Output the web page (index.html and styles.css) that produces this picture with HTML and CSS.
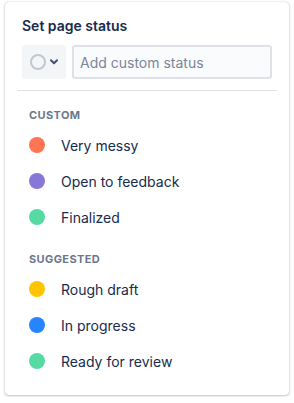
FILE: index.html
```html
<!DOCTYPE html>
<html lang="en">
<head>
    <meta charset="UTF-8">
    <title>Set page status</title>
    <link rel="stylesheet" href="styles.css">
</head>
<body>
    <div class="card">
        <div class="header">
            <h1>Set page status</h1>
            <div class="status-row">
                <button class="emoji-btn">
                    <span class="empty-dot"></span>
                    <svg class="chevron" width="8" height="6" viewBox="0 0 8 6">
                        <path d="M1 1.2 L4 4.2 L7 1.2" fill="none" stroke="#42526E" stroke-width="2" stroke-linecap="round" stroke-linejoin="round"/>
                    </svg>
                </button>
                <input class="status-input" type="text" placeholder="Add custom status">
            </div>
        </div>
        <hr class="divider">

        <div class="group">
            <h2>Custom</h2>
            <div class="item"><span class="dot orange"></span>Very messy</div>
            <div class="item"><span class="dot purple"></span>Open to feedback</div>
            <div class="item"><span class="dot green"></span>Finalized</div>
        </div>

        <div class="group">
            <h2>Suggested</h2>
            <div class="item"><span class="dot yellow"></span>Rough draft</div>
            <div class="item"><span class="dot blue"></span>In progress</div>
            <div class="item"><span class="dot green"></span>Ready for review</div>
        </div>
    </div>
</body>
</html>
```

FILE: styles.css
```css
body {
    margin: 0;
    padding: 2px 5px;
    background: #fff;
    font-family: Inter, "Noto Sans", sans-serif;
    color: #172B4D;
}

.card {
    width: 284px;
    height: 393px;
    box-sizing: border-box;
    background: #fff;
    border-radius: 4px;
    box-shadow: 0 1px 3px rgba(9, 30, 66, 0.25), 0 0 1px rgba(9, 30, 66, 0.31);
}

.header {
    padding: 14px 17px 11px 17px;
}

h1 {
    margin: 0 0 9px 0;
    font-size: 14px;
    font-weight: 600;
    line-height: 20px;
}

.status-row {
    display: flex;
    gap: 6px;
}

.emoji-btn {
    flex: 0 0 44px;
    width: 44px;
    height: 34px;
    border: none;
    border-radius: 3px;
    background: #F4F5F7;
    display: flex;
    align-items: center;
    justify-content: center;
    gap: 4px;
    padding: 0;
}

.empty-dot {
    width: 16px;
    height: 16px;
    box-sizing: border-box;
    border: 2px solid #C1C7D0;
    border-radius: 50%;
}

.status-input {
    flex: 1;
    min-width: 0;
    height: 34px;
    box-sizing: border-box;
    border: 2px solid #DFE1E6;
    border-radius: 3px;
    background: #FAFBFC;
    padding: 0 6px;
    font-family: inherit;
    font-size: 14px;
    color: #172B4D;
}

.status-input::placeholder {
    color: #7A869A;
}

.divider {
    margin: 0 12px;
    border: none;
    border-top: 1px solid #DFE1E6;
}

.group {
    padding: 16px 24px 0 24px;
}

.group + .group {
    padding-top: 16px;
}

h2 {
    margin: 0 0 4px 0;
    font-size: 11px;
    font-weight: 700;
    line-height: 16px;
    letter-spacing: 0.4px;
    text-transform: uppercase;
    color: #6B778C;
}

.item {
    display: flex;
    align-items: center;
    gap: 16px;
    height: 36px;
    font-size: 14px;
}

.dot {
    width: 16px;
    height: 16px;
    border-radius: 50%;
}

.orange { background: #FF7452; }
.purple { background: #8777D9; }
.green { background: #57D9A3; }
.yellow { background: #FFC400; }
.blue { background: #2684FF; }
```
